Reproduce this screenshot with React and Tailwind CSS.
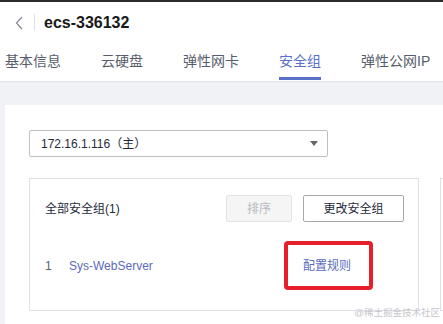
import React from "react";

const tabs = ["基本信息", "云硬盘", "弹性网卡", "安全组", "弹性公网IP"];

const App = () => {
  return (
    <div
      className="relative w-[443px] h-[324px] overflow-hidden bg-white text-[#333]"
      style={{ fontFamily: '"Liberation Sans", "Noto Sans CJK SC", sans-serif' }}
    >
      <div className="h-[2px] bg-[#2b2b2b]" />

      {/* header */}
      <div className="flex h-[41px] items-center pl-[15px]">
        <svg width="8" height="14" viewBox="0 0 8 14" fill="none">
          <path d="M7 1L1.5 7L7 13" stroke="#8a8e99" strokeWidth="1.3" />
        </svg>
        <div className="ml-[11px] h-[17px] w-px bg-[#dfe1e6]" />
        <h1 className="ml-[9px] text-[16px] font-bold leading-[20px] text-[#191919]">
          ecs-336132
        </h1>
      </div>

      {/* tabs */}
      <div className="flex h-[39px] gap-[40px] border-b border-[#e3e5ea] pl-[5px] text-[14px]">
        {tabs.map((t) => (
          <div key={t} className="flex flex-col">
            <span
              className={
                "pt-[8px] leading-[20px] " +
                (t === "安全组" ? "text-[#5a6fc8]" : "text-[#575d6c]")
              }
            >
              {t}
            </span>
            {t === "安全组" && (
              <div className="mt-auto mb-[1px] h-[3px] bg-[#5a6fc8]" />
            )}
          </div>
        ))}
      </div>

      {/* body */}
      <div className="h-[242px] bg-[#f1f2f5] pl-[5px] pt-[23px]">
        <div className="h-full bg-white pl-[24px] pt-[25px]">
          <div className="flex h-[27px] w-[299px] items-center justify-between rounded-[2px] border border-[#bfbfbf] pl-[11px] pr-[9px] text-[12px] text-[#252b3a]">
            <span>
              172.16.1.116（主<span className="[font-feature-settings:'halt']">）</span>
            </span>
            <svg width="8" height="5" viewBox="0 0 8 5">
              <path d="M0 0H8L4 5Z" fill="#666" />
            </svg>
          </div>

          <div className="mt-[21px] flex gap-[21px]">
            <div className="h-[133px] w-[390px] shrink-0 border border-[#dfe1e6] pl-[15px] pr-[14px] pt-[16px] text-[12px]">
              <div className="flex items-center">
                <span className="text-[#252b3a]">全部安全组(1)</span>
                <div className="ml-auto flex gap-[11px]">
                  <button className="h-[27px] w-[66px] rounded-[2px] border border-[#e3e3e3] bg-[#f5f5f6] text-[#b8bac0]">
                    排序
                  </button>
                  <button className="h-[27px] w-[101px] rounded-[2px] border border-[#a8a8a8] bg-white text-[#252b3a]">
                    更改安全组
                  </button>
                </div>
              </div>
              <div className="mt-[19px] flex items-center">
                <span className="w-[24px] text-[#575d6c]">1</span>
                <span className="w-[215px] text-[#5a6bbf]">Sys-WebServer</span>
                <span className="flex h-[49px] w-[89px] items-center rounded-[4px] border-4 border-[#e5202b] pl-[15px] text-[#5a6bbf]">
                  配置规则
                </span>
              </div>
            </div>
            <div className="h-[133px] w-[100px] shrink-0 border border-[#dfe1e6]" />
          </div>
        </div>
      </div>

      <span className="absolute bottom-[5px] right-[3px] text-[9.5px] leading-[12px] text-[#c4c6cc]">
        @稀土掘金技术社区
      </span>
    </div>
  );
};

export default App;
